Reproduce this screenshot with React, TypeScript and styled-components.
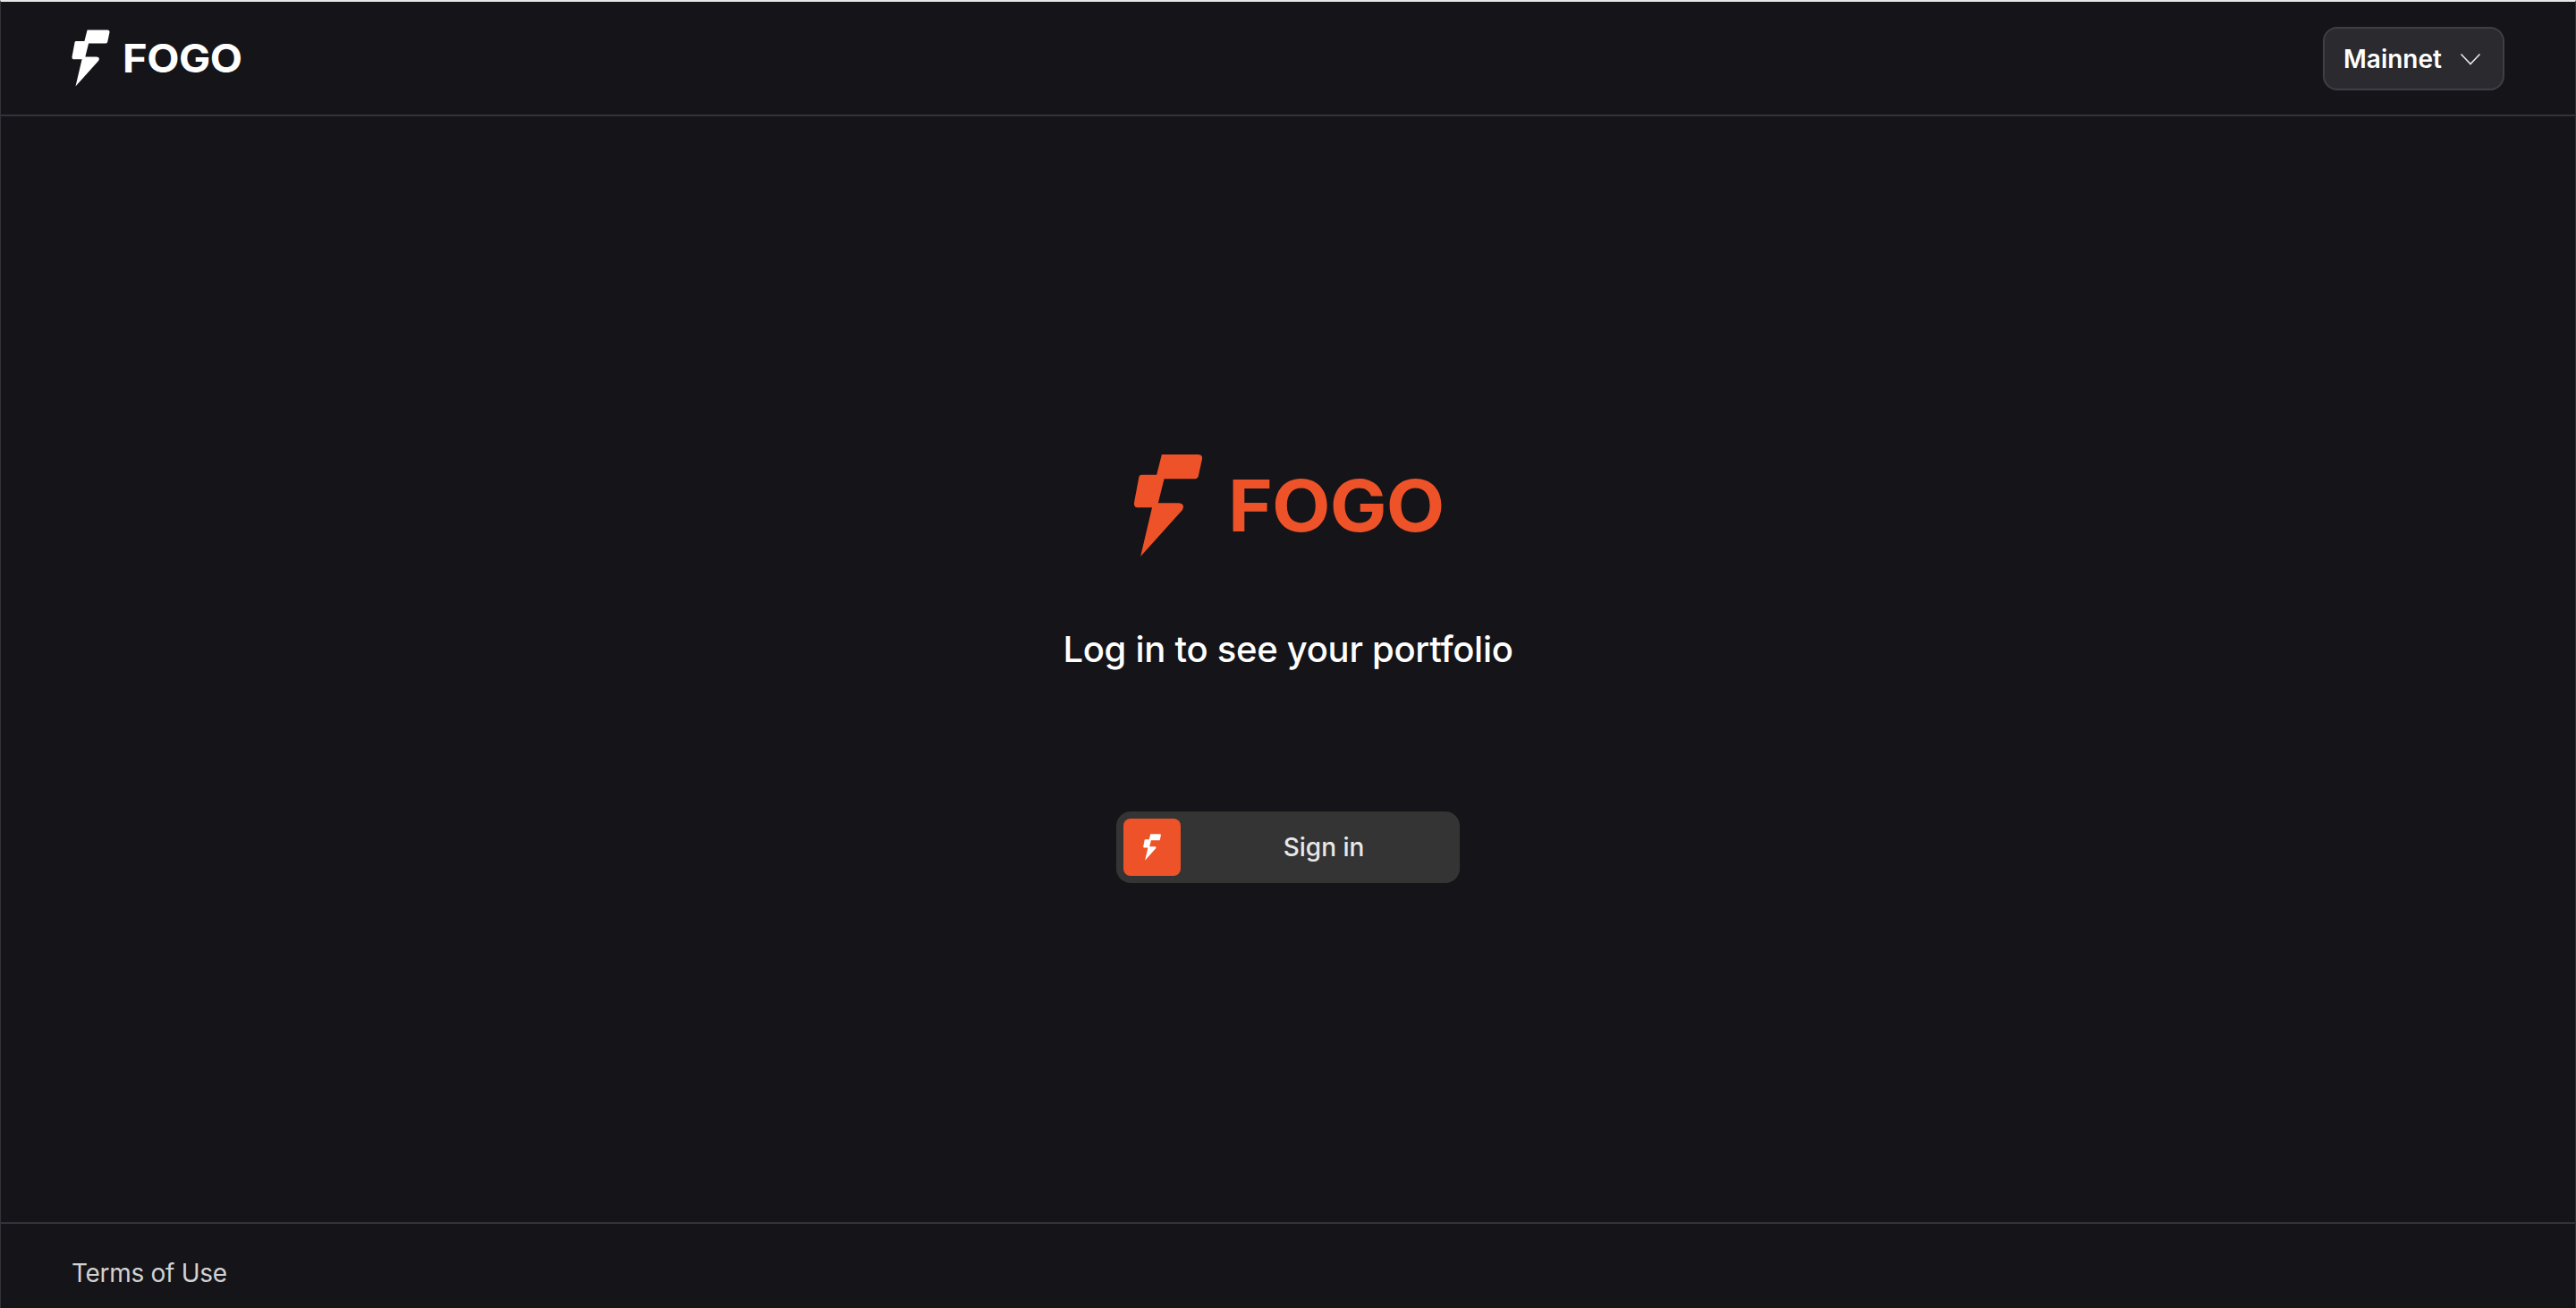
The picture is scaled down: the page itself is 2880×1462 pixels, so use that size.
import React from "react";
import styled, { createGlobalStyle } from "styled-components";

const Global = createGlobalStyle`
  html, body { margin: 0; padding: 0; background: #141419; }
  * { box-sizing: border-box; }
`;

const Page = styled.div`
  height: 1462px;
  display: flex;
  flex-direction: column;
  background: #141419;
  border-top: 2px solid #e8e8e8;
  border-left: 1px solid #33333a;
  border-right: 1px solid #33333a;
  font-family: Inter, "Liberation Sans", sans-serif;
  color: #fff;
`;

const Header = styled.header`
  height: 128px;
  flex: none;
  display: flex;
  align-items: center;
  justify-content: space-between;
  padding: 0 79px;
  border-bottom: 2px solid #33333a;
`;

const Brand = styled.div<{ $gap: number; $color: string }>`
  display: flex;
  align-items: center;
  gap: ${(p) => p.$gap}px;
  color: ${(p) => p.$color};
`;

const Wordmark = styled.span<{ $size: number; $width: number; $scale: number }>`
  display: inline-block;
  width: ${(p) => p.$width}px;
  font-size: ${(p) => p.$size}px;
  line-height: 1;
  font-weight: 700;
  letter-spacing: -0.01em;
  transform: scaleX(${(p) => p.$scale});
  transform-origin: left center;
`;

const NetworkButton = styled.button`
  display: flex;
  align-items: center;
  gap: 20px;
  width: 203px;
  height: 71px;
  padding: 0 24px 0 21px;
  margin-top: 1px;
  background: #2a2a2f;
  border: 2px solid #3f3f46;
  border-radius: 16px;
  color: #fff;
  font: 600 28px/1 Inter, "Liberation Sans", sans-serif;
`;

const Main = styled.main`
  flex: 1;
  display: flex;
  flex-direction: column;
  align-items: center;
  padding-top: 377px;
`;

const Title = styled.h1`
  margin: 79px 0 0;
  font-size: 40px;
  line-height: 48px;
  font-weight: 500;
  letter-spacing: -0.28px;
  color: #fff;
`;

const SignInButton = styled.button`
  display: flex;
  align-items: center;
  width: 384px;
  height: 80px;
  margin-top: 157px;
  padding: 0 8px;
  background: #343434;
  border: 0;
  border-radius: 16px;
  color: #e8e8e8;
  font: 500 28px/1 Inter, "Liberation Sans", sans-serif;
`;

const SignInBadge = styled.span`
  flex: none;
  width: 64px;
  height: 64px;
  display: flex;
  align-items: center;
  justify-content: center;
  background: #ee5228;
  border-radius: 8px;
  color: #fff;
`;

const SignInLabel = styled.span`
  flex: 1;
  padding-left: 16px;
  text-align: center;
`;

const Footer = styled.footer`
  height: 96px;
  flex: none;
  display: flex;
  align-items: center;
  padding: 16px 79px 0;
  border-top: 2px solid #33333a;
  font-size: 28px;
  letter-spacing: -0.3px;
  color: #d2d2d2;
`;

const Bolt = ({ height }: { height: number }) => (
  <svg viewBox="78 54 230 342" height={height} width={(height * 230) / 342} fill="currentColor" aria-hidden>
    <path d="M172 57H292Q307 57 305 72L293 127Q291 137 281 137H180L160 217H228Q250 219 240 240L102 393L140 232H92Q79 231 81 215L97 130Q99 124 105 124H155Z" />
  </svg>
);

export default function App() {
  return (
    <>
      <Global />
      <Page>
        <Header>
          <Brand $gap={14} $color="#fff">
            <Bolt height={64} />
            <Wordmark $size={44} $width={133} $scale={1.07}>FOGO</Wordmark>
          </Brand>
          <NetworkButton>
            Mainnet
            <svg width="24" height="14" viewBox="0 0 24 14" fill="none" stroke="#e8e8e8" strokeWidth="1.6">
              <path d="M1.5 1.5L12 12.5L22.5 1.5" />
            </svg>
          </NetworkButton>
        </Header>
        <Main>
          <Brand $gap={28} $color="#ee5228">
            <Bolt height={116} />
            <Wordmark $size={80} $width={240} $scale={1.063}>FOGO</Wordmark>
          </Brand>
          <Title>Log in to see your portfolio</Title>
          <SignInButton>
            <SignInBadge>
              <Bolt height={30} />
            </SignInBadge>
            <SignInLabel>Sign in</SignInLabel>
          </SignInButton>
        </Main>
        <Footer>Terms of Use</Footer>
      </Page>
    </>
  );
}
